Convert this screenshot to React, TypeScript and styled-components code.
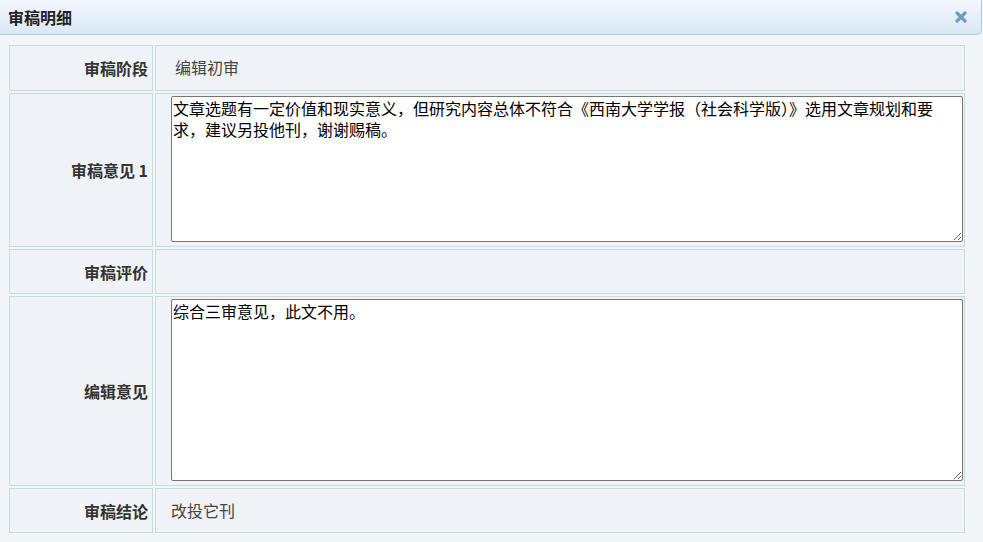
import React from 'react'
import styled, { createGlobalStyle } from 'styled-components'

const GlobalStyle = createGlobalStyle`
  html, body {
    margin: 0;
    padding: 0;
    background: #f3f6f9;
  }
  body {
    font-family: "Noto Sans CJK SC", "Noto Sans", "Liberation Sans", sans-serif;
    font-size: 16px;
    color: #333;
  }
`

const Page = styled.div`
  width: 983px;
  height: 542px;
  overflow: hidden;
`

const TitleBar = styled.div`
  box-sizing: border-box;
  width: 982px;
  height: 35px;
  display: flex;
  align-items: center;
  justify-content: space-between;
  padding: 0 14px 0 8px;
  background: linear-gradient(to bottom, #f3f8fd 0%, #e6eff8 50%, #dae8f5 100%);
  border-right: 1px solid #a8cbea;
  border-bottom: 1px solid #a8cbea;
  border-bottom-right-radius: 5px;
`

const Title = styled.span`
  font-weight: bold;
  font-size: 16px;
  color: #222;
  line-height: 1;
`

const CloseButton = styled.button`
  border: 0;
  background: none;
  padding: 0;
  width: 12px;
  height: 12px;
  display: flex;
  cursor: pointer;
`

const Grid = styled.div`
  display: grid;
  grid-template-columns: 144px 810px;
  grid-template-rows: 46px 154px 45px 190px 45px;
  gap: 2px;
  margin: 10px 0 0 9px;
`

const Cell = styled.div<{ $label?: boolean }>`
  box-sizing: border-box;
  display: flex;
  align-items: center;
  justify-content: ${(p) => (p.$label ? 'flex-end' : 'flex-start')};
  padding: ${(p) => (p.$label ? '0 4px 0 0' : '2px 1px 4px 15px')};
  background: #eff3f7;
  border: 1px solid #c6dddb;
  font-size: 16px;
  font-weight: ${(p) => (p.$label ? 'bold' : 'normal')};
  color: ${(p) => (p.$label ? '#333' : '#444')};
`

const Value = styled.span<{ $indent?: number }>`
  padding-left: ${(p) => p.$indent || 0}px;
`

const Note = styled.textarea`
  box-sizing: border-box;
  width: 792px;
  height: 100%;
  margin: 0;
  padding: 1px 1px;
  border: 1px solid #767676;
  border-radius: 2px;
  background: #fff;
  font-family: "Noto Sans CJK SC", "Noto Sans", sans-serif;
  font-size: 16px;
  line-height: 21px;
  color: #000;
  resize: both;
`

function CloseIcon() {
  return (
    <svg width="12" height="12" viewBox="0 0 12 12">
      <path d="M2 2L10 10M10 2L2 10" stroke="#6f9cc8" strokeWidth="3.2" strokeLinecap="round" />
    </svg>
  )
}

const opinion1 =
  '文章选题有一定价值和现实意义，但研究内容总体不符合《西南大学学报（社会科学版）》选用文章规划和要求，建议另投他刊，谢谢赐稿。'

function App() {
  return (
    <Page>
      <GlobalStyle />
      <TitleBar>
        <Title>审稿明细</Title>
        <CloseButton aria-label="关闭">
          <CloseIcon />
        </CloseButton>
      </TitleBar>
      <Grid>
        <Cell $label>审稿阶段</Cell>
        <Cell>
          <Value $indent={4}>编辑初审</Value>
        </Cell>

        <Cell $label>审稿意见 1</Cell>
        <Cell>
          <Note defaultValue={opinion1} />
        </Cell>

        <Cell $label>审稿评价</Cell>
        <Cell />

        <Cell $label>编辑意见</Cell>
        <Cell>
          <Note defaultValue="综合三审意见，此文不用。" />
        </Cell>

        <Cell $label>审稿结论</Cell>
        <Cell>
          <Value>改投它刊</Value>
        </Cell>
      </Grid>
    </Page>
  )
}

export default App
